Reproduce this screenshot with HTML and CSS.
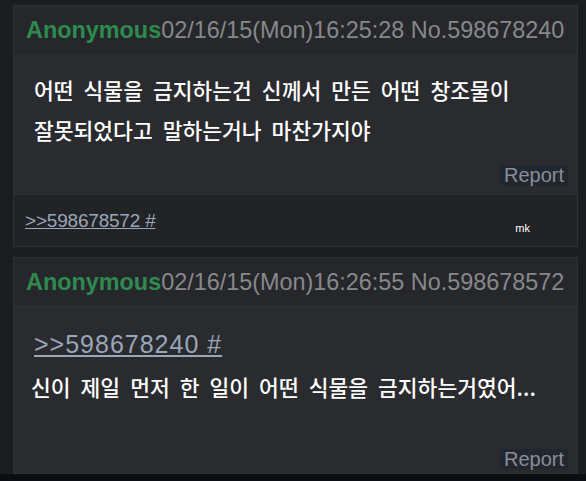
FILE: index.html
```html
<!DOCTYPE html>
<html lang="ko">
<head>
<meta charset="utf-8">
<title>Thread</title>
<link rel="stylesheet" href="styles.css">
</head>
<body>
<div class="page">
  <div class="post">
    <div class="post-head">
      <span class="name">Anonymous</span><span class="date">02/16/15(Mon)16:25:28 No.598678240</span>
    </div>
    <div class="post-body post-body-1">
      <p class="msg">어떤 식물을 금지하는건 신께서 만든 어떤 창조물이<br>잘못되었다고 말하는거나 마찬가지야</p>
      <div class="report-row"><span class="report">Report</span></div>
    </div>
    <div class="post-foot">
      <a class="quote quote-small" href="#">&gt;&gt;598678572 #</a>
      <span class="mk">mk</span>
    </div>
  </div>
  <div class="post">
    <div class="post-head">
      <span class="name">Anonymous</span><span class="date">02/16/15(Mon)16:26:55 No.598678572</span>
    </div>
    <div class="post-body post-body-2">
      <a class="quote quote-big" href="#">&gt;&gt;598678240 #</a>
      <p class="msg msg-2">신이 제일 먼저 한 일이 어떤 식물을 금지하는거였어...</p>
      <div class="report-row report-row-2"><span class="report">Report</span></div>
    </div>
  </div>
</div>
<div class="bottom-strip"></div>
</body>
</html>
```
FILE: styles.css
```css
html, body {
  margin: 0;
  padding: 0;
}
body {
  background: #1b1c20;
  font-family: "Liberation Sans", Arial, sans-serif;
  width: 586px;
  height: 481px;
  overflow: hidden;
}
.page {
  padding: 5px 8px 0 13px;
  display: flex;
  flex-direction: column;
  gap: 10px;
}
.post {
  border: 1px solid #303135;
  background: #2a2b2f;
}
.post-head {
  height: 48px;
  display: flex;
  align-items: center;
  padding-left: 12px;
  background: #26272b;
  border-bottom: 1px solid #303135;
  font-size: 23.4px;
  white-space: nowrap;
}
.name {
  color: #2e8a4f;
  font-weight: bold;
}
.date {
  color: #88888c;
}
.post-body {
  display: flex;
  flex-direction: column;
}
.post-body-1 {
  height: 139px;
  padding: 15px 0 0 20px;
  box-sizing: border-box;
}
.msg {
  margin: 0;
  color: #ffffff;
  font-family: "Noto Sans CJK KR", sans-serif;
  font-weight: 500;
  font-size: 21.5px;
  line-height: 40px;
  word-spacing: 4px;
}
.report-row {
  display: flex;
  justify-content: flex-end;
  padding-right: 9px;
  margin-top: 15px;
}
.report {
  background: #212731;
  color: #8a8d93;
  font-size: 20px;
  line-height: 20px;
  padding: 0 4px;
}
.post-foot {
  height: 51px;
  background: #222327;
  border-top: 1px solid #2c2d31;
  display: flex;
  align-items: center;
  padding-left: 11px;
}
.quote {
  color: #9aa6b9;
  text-decoration: underline;
}
.quote-small {
  font-size: 19px;
  letter-spacing: -0.2px;
}
.mk {
  margin-left: auto;
  margin-right: 47px;
  align-self: flex-end;
  margin-bottom: 12px;
  color: #ffffff;
  font-size: 11px;
}
.post-body-2 {
  height: 166px;
  padding: 22px 0 0 20px;
  box-sizing: border-box;
}
.quote-big {
  font-size: 25px;
  letter-spacing: 1px;
  line-height: 30px;
  align-self: flex-start;
}
.msg-2 {
  margin-top: 10px;
  margin-left: -3px;
  line-height: 36px;
}
.report-row-2 {
  margin-top: 44px;
}
.bottom-strip {
  height: 12px;
  background: #0b0e12;
  margin-top: 0;
}
```
